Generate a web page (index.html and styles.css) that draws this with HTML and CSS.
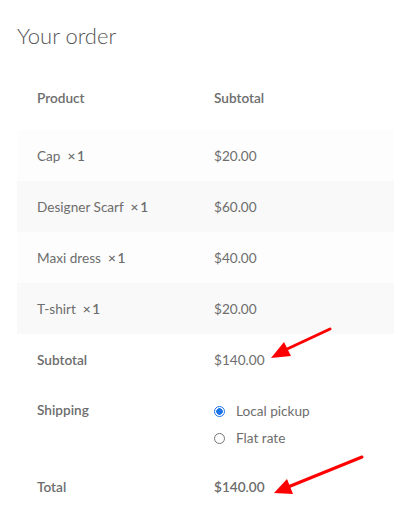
FILE: index.html
```html
<!DOCTYPE html>
<html>
<head>
<meta charset="utf-8">
<link rel="stylesheet" href="styles.css">
</head>
<body>
<div class="page">
  <h2 class="title">Your order</h2>
  <table class="order">
    <thead>
      <tr><th class="c1">Product</th><th class="c2">Subtotal</th></tr>
    </thead>
    <tbody>
      <tr class="odd"><td class="c1">Cap&nbsp; <b class="qty">×&#8201;1</b></td><td class="c2">$20.00</td></tr>
      <tr class="even"><td class="c1">Designer Scarf&nbsp; <b class="qty">×&#8201;1</b></td><td class="c2">$60.00</td></tr>
      <tr class="odd"><td class="c1">Maxi dress&nbsp; <b class="qty">×&#8201;1</b></td><td class="c2">$40.00</td></tr>
      <tr class="even"><td class="c1">T-shirt&nbsp; <b class="qty">×&#8201;1</b></td><td class="c2">$20.00</td></tr>
    </tbody>
    <tfoot>
      <tr class="subtotal"><th class="c1">Subtotal</th><td class="c2">$140.00</td></tr>
      <tr class="shipping"><th class="c1">Shipping</th>
        <td class="c2">
          <ul class="methods">
            <li><span class="radio checked"></span><span>Local pickup</span></li>
            <li><span class="radio"></span><span>Flat rate</span></li>
          </ul>
        </td>
      </tr>
      <tr class="total"><th class="c1">Total</th><td class="c2"><strong>$140.00</strong></td></tr>
    </tfoot>
  </table>
  <svg class="arrows" width="394" height="521" viewBox="0 0 394 521">
    <line x1="330" y1="329" x2="285" y2="350" stroke="#ff0000" stroke-width="3" stroke-linecap="round"/>
    <polygon points="271,358 284,342 291,356" fill="#ff0000"/>
    <line x1="362" y1="457" x2="288" y2="487" stroke="#ff0000" stroke-width="3" stroke-linecap="round"/>
    <polygon points="274,493 287,479 293,494" fill="#ff0000"/>
  </svg>
</div>
</body>
</html>
```

FILE: styles.css
```css
html, body {
  margin: 0;
  padding: 0;
  background: #ffffff;
}
.page {
  position: relative;
  padding: 19px 0 0 17px;
  font-family: "Source Sans Pro", Lato, "Liberation Sans", sans-serif;
  color: #6d6d6d;
  font-size: 13.6px;
  overflow: hidden;
  height: 521px;
  box-sizing: border-box;
}
.title {
  margin: 0;
  font-size: 22px;
  font-weight: 300;
  color: #555555;
  line-height: 33px;
  letter-spacing: 0;
}
.order {
  margin-top: 21px;
  width: 377px;
  border-collapse: collapse;
  border-spacing: 0;
}
.order th, .order td {
  text-align: left;
  padding: 0;
  height: 51px;
  vertical-align: middle;
}
.order th, .order strong, .qty {
  font-weight: 600;
}
.order thead th {
  height: 50px;
  padding-bottom: 7px;
}
.c1 {
  width: 177px;
  padding-left: 20px !important;
}
.odd td { background: #fdfdfd; }
.even td { background: #f9f9f9; }
.methods {
  list-style: none;
  margin: 0;
  padding: 3px 0 0 0;
}
.methods li {
  display: flex;
  align-items: center;
  gap: 11px;
  height: 27px;
}
.shipping th {
  vertical-align: top;
  padding-top: 17px;
}
.shipping td {
  height: 76px;
}
.radio {
  width: 11px;
  height: 11px;
  border-radius: 50%;
  border: 1px solid #767676;
  box-sizing: border-box;
  background: #fff;
}
.radio.checked {
  border: 1.5px solid #1a73e8;
  background: radial-gradient(circle, #1a73e8 0 3px, #ffffff 3.5px);
}
.total th, .total td {
  height: 52px;
}
.arrows {
  position: absolute;
  left: 0;
  top: 0;
  pointer-events: none;
}
```
